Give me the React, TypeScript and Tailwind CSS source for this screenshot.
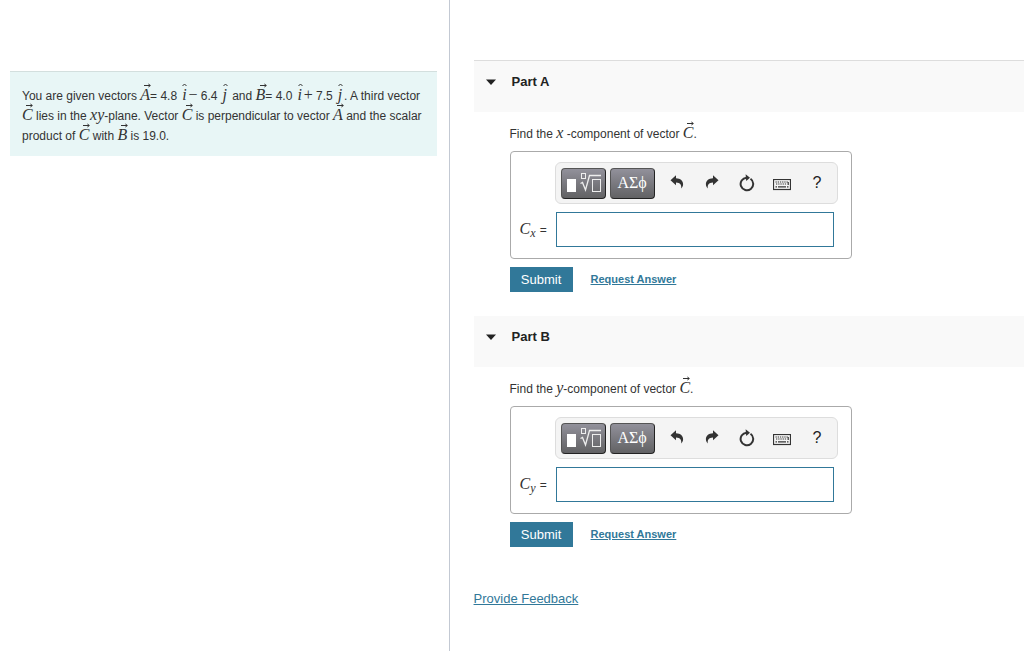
import React from 'react';

type VectorProps = { name: string };

// Letter with a small arrow over it
const Vector: React.FC<VectorProps> = ({ name }) => (
    <span className="relative inline-block font-['Liberation_Serif',serif] text-[16px] leading-none italic">
        {name}
        <svg className="absolute -top-1 left-1 h-[5px] w-[7px]" viewBox="0 0 7 5" fill="none" stroke="#333">
            <path d="M0 2.5H6M4.4 1L6.4 2.5L4.4 4" strokeWidth="1" />
        </svg>
    </span>
);

// Unit vector, a letter with a hat
const Unit: React.FC<VectorProps> = ({ name }) => (
    <span className="relative inline-block w-2 text-center font-['Liberation_Serif',serif] text-[16px] leading-none italic">
        {name}
        <svg className="absolute -top-1 left-[2px] h-[4px] w-[5px]" viewBox="0 0 5 4" fill="none" stroke="#333">
            <path d="M.5 3L2.5 1L4.5 3" strokeWidth="1" />
        </svg>
    </span>
);

const Variable: React.FC<VectorProps> = ({ name }) => (
    <span className="font-['Liberation_Serif',serif] text-[16px] leading-none italic">{name}</span>
);

const Operator: React.FC<VectorProps> = ({ name }) => (
    <span className="font-['Liberation_Serif',serif] text-[16px] leading-none">{name}</span>
);

const UndoIcon: React.FC<{ flipped?: boolean }> = ({ flipped }) => (
    <svg className="mb-[2px] h-[14px] w-[14px]" viewBox="0 0 14 14" fill="#333">
        <path
            transform={flipped ? 'matrix(-1 0 0 1 14 0)' : undefined}
            d="M.5 5.2L6 .3V3.2C10.5 3.3 13.2 6 13.1 9.2C13.1 10.8 12.4 12.2 11.2 13.4C11.6 10 10.4 7.7 6 7.5V10.2Z"
        />
    </svg>
);

const ResetIcon: React.FC = () => (
    <svg className="h-[18px] w-[16px]" viewBox="0 0 16 18" fill="none">
        <path d="M11.5 4.8A6.3 6.3 0 1 1 7.6 3.7" stroke="#333" strokeWidth="2" />
        <path d="M6.6 .3L11 3.7L7.2 7Z" fill="#333" />
    </svg>
);

const KeyboardIcon: React.FC = () => (
    <svg className="h-[12px] w-[18px]" viewBox="0 0 18 12" fill="none" stroke="#333">
        <rect x=".5" y=".5" width="17" height="10" strokeWidth="1.2" />
        <path d="M2.5 3H15.5M3 5H14" strokeDasharray="1.3 .9" strokeWidth="1.2" />
        <path d="M2.5 7.8H4M5 7.8H13M14 7.8H15.5M15.2 3V6" strokeWidth="1.2" />
    </svg>
);

const TemplateIcon: React.FC = () => (
    <svg className="h-[22px] w-[38px] shrink-0" viewBox="0 0 38 22" fill="none" stroke="#eee">
        <rect x="3" y="7" width="9" height="13" fill="#fff" stroke="none" />
        <rect x="17.5" y="1.5" width="4" height="5" />
        <path d="M16.5 11.5L18.5 10.5L21.5 18L25.5 3.5H37" strokeWidth="1.3" />
        <rect x="28.5" y="7.5" width="8" height="12" />
    </svg>
);

const darkButton =
    'flex h-[31px] w-[45px] items-center justify-center rounded border border-t-[#555] border-l-[#555] border-r-[#222] border-b-[#222] bg-linear-to-b from-[#92919b] to-[#626264] text-white';
const iconButton = 'flex h-8 w-[35px] items-center justify-center';

type PartProps = {
    title: string;
    axis: string;
    gap?: boolean;
    first?: boolean;
};

const Part: React.FC<PartProps> = ({ title, axis, gap, first }) => {
    const id = `answer-${axis}`;
    return (
        <section>
            <header className={first ? 'h-[52px] border-t border-[#ddd] bg-[#f9f9f9]' : 'h-[51px] bg-[#f9f9f9]'}>
                <button className="flex h-[42px] items-center pl-3 text-[13px] font-bold text-[#222]">
                    <svg className="mr-4 h-[6px] w-[10px]" viewBox="0 0 10 6" fill="#222">
                        <path d="M0 .5H10L5 6Z" />
                    </svg>
                    {title}
                </button>
            </header>
            <div className="pt-3 pb-6 pl-[36px]">
                <p className="mb-[7px] h-5 leading-5">
                    Find the <Variable name={axis} />
                    {gap && ' '}-component of vector <Vector name="C" />.
                </p>
                <div className="flex h-[108px] w-full max-w-[342px] flex-col gap-2 rounded border border-[#aaa] pt-[10px] pr-[14px] pl-[9px]">
                    <div className="ml-[35px] flex h-[42px] w-[283px] shrink-0 items-center rounded-md border border-[#ddd] bg-[#f4f4f4] pl-[5px]">
                        <button aria-label="Templates" className={darkButton}>
                            <TemplateIcon />
                        </button>
                        <button
                            className={`${darkButton} mr-[5px] ml-1 font-['Liberation_Serif',serif] text-[16px]`}
                        >
                            ΑΣϕ
                        </button>
                        <button aria-label="Undo" className={iconButton}>
                            <UndoIcon />
                        </button>
                        <button aria-label="Redo" className={iconButton}>
                            <UndoIcon flipped />
                        </button>
                        <button aria-label="Reset" className={iconButton}>
                            <ResetIcon />
                        </button>
                        <button aria-label="Keyboard" className={`${iconButton} pt-1`}>
                            <KeyboardIcon />
                        </button>
                        <button className={`${iconButton} text-[16px] text-[#222]`}>?</button>
                    </div>
                    <div className="flex items-center">
                        <label htmlFor={id} className="w-9 shrink-0 whitespace-nowrap">
                            <Variable name="C" />
                            <sub className="bottom-0 mr-px align-[-3px] font-['Liberation_Serif',serif] text-[12px] italic">{axis}</sub> =
                        </label>
                        <input
                            id={id}
                            type="text"
                            className="h-[35px] w-[278px] border border-[#317899] bg-white px-2 outline-none"
                        />
                    </div>
                </div>
                <div className="mt-2 flex items-center gap-[18px]">
                    <button className="h-[25px] w-[63px] bg-[#317899] text-[13px] text-white">Submit</button>
                    <a href="#" className="text-[11px] font-bold text-[#317899] underline">
                        Request Answer
                    </a>
                </div>
            </div>
        </section>
    );
};

const App: React.FC = () => {
    return (
        <div className="flex min-h-screen bg-white font-['Liberation_Sans',Arial,sans-serif] text-[12px] text-[#333]">
            <aside className="w-[43.9%] shrink-0 border-r border-[#c3c9d3] pt-[71px] pr-3 pl-[10px]">
                <p className="border-t border-[#d3dfde] bg-[#e8f6f6] pt-[14px] pr-3 pb-[10px] pl-3 leading-5">
                    You are given vectors <Vector name="A" />= 4.8 <Unit name="i" />
                    <Operator name="−" /> 6.4 <Unit name="j" /> and <Vector name="B" />= 4.0 <Unit name="i" />
                    <Operator name="+" /> 7.5 <Unit name="j" />. A third vector{' '}
                    <Vector name="C" /> lies in the <Variable name="xy" />-plane. Vector <Vector name="C" /> is
                    perpendicular to vector <Vector name="A" /> and the scalar{' '}
                    product of <Vector name="C" /> with <Vector name="B" /> is 19.0.
                </p>
            </aside>
            <main className="min-w-0 flex-1 pt-[60px] pl-6">
                <Part title="Part A" axis="x" gap first />
                <Part title="Part B" axis="y" />
                <a href="#" className="mt-[18px] inline-block text-[13px] leading-5 text-[#317899] underline">
                    Provide Feedback
                </a>
            </main>
        </div>
    );
};

export default App;
